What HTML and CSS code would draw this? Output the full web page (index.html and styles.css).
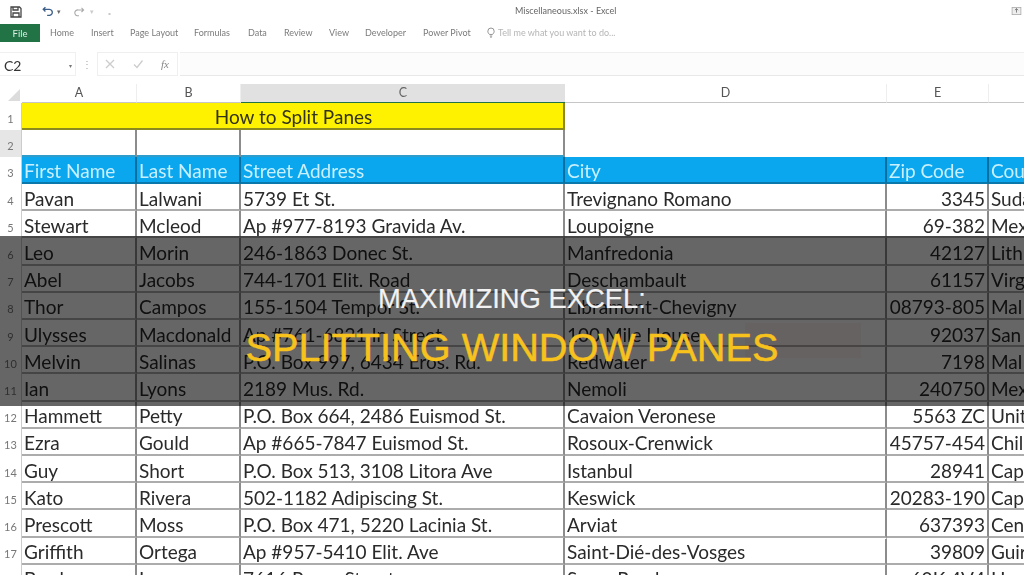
FILE: index.html
```html
<!DOCTYPE html>
<html lang="en">
<head>
<meta charset="utf-8">
<title>Maximizing Excel: Splitting Window Panes</title>
<link rel="stylesheet" href="styles.css">
</head>
<body>
<main class="app">
  <header class="titlebar">
    <div class="qat">
      <svg class="qi save" viewBox="0 0 12 12"><path d="M1 1h8.500L11 2.500V11H1z M3 1v3h5V1 M3 11V7h6v4" fill="none" stroke="#444" stroke-width="1.300"/></svg>
      <svg class="qi undo" viewBox="0 0 14 12"><path d="M4 1L1.500 3.500 4 6M2 3.500h6a3.500 3.500 0 0 1 1 7H6" fill="none" stroke="#3c5f8a" stroke-width="1.600"/></svg>
      <span class="caret">▾</span>
      <svg class="qi redo" viewBox="0 0 14 12"><path d="M10 1l2.500 2.500L10 6M12 3.500H6a3.500 3.500 0 0 0-1 7h2" fill="none" stroke="#a9a9a9" stroke-width="1.300"/></svg>
      <span class="caret faint">▾</span>
      <span class="caret custom">₌</span>
    </div>
    <div class="doc">Miscellaneous.xlsx - Excel</div>
    <svg class="restore" viewBox="0 0 12 10"><rect x=".5" y=".5" width="11" height="9" fill="#eee" stroke="#aaa"/><path d="M6 2v5M4 4l2-2 2 2" fill="none" stroke="#666"/></svg>
  </header>
  <nav class="ribbon">
    <span class="file">File</span>
    <span class="tab home">Home</span><span class="tab insert">Insert</span><span class="tab layout">Page Layout</span><span class="tab formulas">Formulas</span><span class="tab data">Data</span><span class="tab review">Review</span><span class="tab view">View</span><span class="tab dev">Developer</span><span class="tab pivot">Power Pivot</span>
    <svg class="bulb" viewBox="0 0 10 14"><path d="M3.200 9.500C2 8.500 1 7.300 1 5.300a4 4 0 0 1 8 0c0 2-1 3.200-2.200 4.200zM3.500 11.500h3M4 13h2" fill="none" stroke="#777" stroke-width="1"/></svg>
    <span class="tell">Tell me what you want to do...</span>
  </nav>
  <section class="formula">
    <div class="namebox"><span>C2</span><i>▾</i></div>
    <div class="grip">⋮</div>
    <div class="fbtns">
      <svg viewBox="0 0 10 10"><path d="M1 1l8 8M9 1l-8 8" stroke="#ccc" stroke-width="1.300"/></svg>
      <svg viewBox="0 0 10 10"><path d="M1 5.500l3 3 5.500-7" fill="none" stroke="#ccc" stroke-width="1.300"/></svg>
      <em>fx</em>
    </div>
    <div class="finput"></div>
  </section>
  <section class="sheet">
    <div class="corner"><b></b></div>
    <div class="ch">A</div><div class="ch">B</div><div class="ch sel">C</div><div class="ch">D</div><div class="ch">E</div><div class="ch last"></div>

    <div class="rh">1</div><div class="c merged">How to Split Panes</div><div class="c plain span3"></div>
    <div class="rh act">2</div><div class="c empty"></div><div class="c empty"></div><div class="c empty sel2"></div><div class="c plain span3"></div>

    <div class="rh">3</div><div class="c hd">First Name</div><div class="c hd">Last Name</div><div class="c hd">Street Address</div><div class="c hd">City</div><div class="c hd">Zip Code</div><div class="c hd">Cou</div>

    <div class="rh">4</div><div class="c">Pavan</div><div class="c">Lalwani</div><div class="c">5739 Et St.</div><div class="c">Trevignano Romano</div><div class="c n">3345</div><div class="c">Suda</div>
    <div class="rh">5</div><div class="c">Stewart</div><div class="c">Mcleod</div><div class="c">Ap #977-8193 Gravida Av.</div><div class="c">Loupoigne</div><div class="c n">69-382</div><div class="c">Mex</div>
    <div class="rh">6</div><div class="c">Leo</div><div class="c">Morin</div><div class="c">246-1863 Donec St.</div><div class="c">Manfredonia</div><div class="c n">42127</div><div class="c">Lith</div>
    <div class="rh">7</div><div class="c">Abel</div><div class="c">Jacobs</div><div class="c">744-1701 Elit. Road</div><div class="c">Deschambault</div><div class="c n">61157</div><div class="c">Virg</div>
    <div class="rh">8</div><div class="c">Thor</div><div class="c">Campos</div><div class="c">155-1504 Tempor St.</div><div class="c">Libramont-Chevigny</div><div class="c n">08793-805</div><div class="c">Mal</div>
    <div class="rh">9</div><div class="c">Ulysses</div><div class="c">Macdonald</div><div class="c">Ap #761-6821 In Street</div><div class="c">100 Mile House</div><div class="c n">92037</div><div class="c">San</div>
    <div class="rh">10</div><div class="c">Melvin</div><div class="c">Salinas</div><div class="c">P.O. Box 997, 6434 Eros. Rd.</div><div class="c">Redwater</div><div class="c n">7198</div><div class="c">Mal</div>
    <div class="rh">11</div><div class="c">Ian</div><div class="c">Lyons</div><div class="c">2189 Mus. Rd.</div><div class="c">Nemoli</div><div class="c n">240750</div><div class="c">Mex</div>
    <div class="rh">12</div><div class="c">Hammett</div><div class="c">Petty</div><div class="c">P.O. Box 664, 2486 Euismod St.</div><div class="c">Cavaion Veronese</div><div class="c n">5563 ZC</div><div class="c">Unit</div>
    <div class="rh">13</div><div class="c">Ezra</div><div class="c">Gould</div><div class="c">Ap #665-7847 Euismod St.</div><div class="c">Rosoux-Crenwick</div><div class="c n">45757-454</div><div class="c">Chile</div>
    <div class="rh">14</div><div class="c">Guy</div><div class="c">Short</div><div class="c">P.O. Box 513, 3108 Litora Ave</div><div class="c">Istanbul</div><div class="c n">28941</div><div class="c">Cap</div>
    <div class="rh">15</div><div class="c">Kato</div><div class="c">Rivera</div><div class="c">502-1182 Adipiscing St.</div><div class="c">Keswick</div><div class="c n">20283-190</div><div class="c">Cap</div>
    <div class="rh">16</div><div class="c">Prescott</div><div class="c">Moss</div><div class="c">P.O. Box 471, 5220 Lacinia St.</div><div class="c">Arviat</div><div class="c n">637393</div><div class="c">Cent</div>
    <div class="rh">17</div><div class="c">Griffith</div><div class="c">Ortega</div><div class="c">Ap #957-5410 Elit. Ave</div><div class="c">Saint-Dié-des-Vosges</div><div class="c n">39809</div><div class="c">Guir</div>
    <div class="rh">18</div><div class="c">Brody</div><div class="c">Lawson</div><div class="c">7616 Purus Street</div><div class="c">Sagar Road</div><div class="c n">60K 4V4</div><div class="c">Hon</div>
  </section>
  <div class="dashes"></div>
  <div class="banner">
    <div class="watermark"></div>
    <h1><span class="l1">Maximizing Excel:</span><span class="l2">Splitting Window Panes</span></h1>
  </div>
</main>
</body>
</html>
```
FILE: styles.css
```css
* { box-sizing: border-box; }
html, body { margin: 0; height: 100%; }
body { overflow: hidden; background: #fff; font-family: "Lato", "Liberation Sans", sans-serif; }
.app { position: relative; width: 1024px; height: 575px; overflow: hidden; background: #fff; }

.titlebar { height: 23px; display: flex; align-items: center; position: relative; padding-left: 10px; filter: blur(.3px); }
.qat { display: flex; align-items: center; color: #888; }
.qi { display: block; }
.save { width: 12px; height: 12px; margin-right: 20px; }
.undo { width: 12px; height: 11px; margin-top: -1px; }
.redo { width: 12px; height: 10px; margin-left: 12px; }
.caret { font-size: 7px; margin-left: 3px; color: #666; }
.caret.faint { color: #ccc; margin-left: 5px; }
.caret.custom { font-size: 9px; margin-left: 14px; color: #999; }
.doc { position: absolute; left: 515px; top: 5px; font-size: 9px; color: #666; white-space: nowrap; }
.restore { position: absolute; left: 1011px; top: 7px; width: 11px; height: 8px; }

.ribbon { height: 20px; display: flex; align-items: center; font-size: 9px; color: #7b7b7b; white-space: nowrap; filter: blur(.3px); }
.file { width: 40px; height: 18px; background: #217346; color: #d9efe2; display: flex; align-items: center; justify-content: center; font-size: 9.500px; margin-right: 10px; }
.tab { padding-bottom: 2px; }
.home { width: 41px; }
.insert { width: 39px; }
.layout { width: 64px; }
.formulas { width: 54px; }
.data { width: 36px; }
.review { width: 45px; }
.view { width: 36px; }
.dev { width: 58px; }
.pivot { width: 64px; }
.bulb { width: 8px; height: 11px; margin-bottom: 2px; }
.tell { margin-left: 3px; color: #b5b5b5; padding-bottom: 2px; }

.formula { height: 24px; margin-top: 9px; display: flex; align-items: stretch; position: relative; filter: blur(.3px); }
.namebox { width: 76px; display: flex; align-items: center; justify-content: space-between; padding: 2px 3px 0 4px; border: 1px solid #f0f0f0; border-left: 0; font-size: 14px; color: #333; }
.namebox i { font-size: 6px; font-style: normal; color: #777; }
.grip { width: 21px; display: flex; align-items: center; justify-content: center; font-size: 10px; color: #aaa; }
.fbtns { width: 81px; display: flex; align-items: center; gap: 18px; padding-left: 7px; border: 1px solid #efefef; }
.fbtns svg { width: 10px; height: 10px; }
.fbtns em { font-family: "Liberation Serif", serif; font-size: 11px; color: #888; }
.finput { flex: 1; margin-left: 2px; background: #fcfcfc; border-top: 1px solid #efefef; border-bottom: 1px solid #e8e8e8; }

.sheet {
  margin-top: 8px;
  display: grid;
  grid-template-columns: 22px 115px 104px 324px 322px 102px 60px;
  grid-template-rows: 18.500px repeat(18, 27.2px);
  font-size: 19px;
  color: #2a2a2a;
  filter: blur(.35px);
}
.corner { position: relative; background: #fff; }
.corner b { position: absolute; right: 2px; bottom: 2px; width: 0; height: 0; border-left: 12px solid transparent; border-bottom: 12px solid #dcdcdc; }
.ch { font-size: 12.500px; color: #555; display: flex; align-items: center; justify-content: center; border-right: 1px solid #eee; border-bottom: 1px solid #c6c6c6; }
.ch.sel { background: #e1e1e1; border-bottom: 1px solid #217346; color: #666; border-right: 0; }
.ch.last { border-right: 0; }
.rh { font-size: 11px; color: #777; display: flex; align-items: center; justify-content: center; padding-top: 5px; border-right: 1px solid #ccc; }
.rh.act { background: #e6e6e6; }
.c { display: flex; align-items: center; padding: 3px 0 0 2px; white-space: nowrap; overflow: hidden; border-right: 2px solid #8c8c8c; border-bottom: 2px solid #acacac; }
.n { justify-content: flex-end; padding: 3px 2px 0 0; }
.merged { grid-column: span 3; background: #fff200; justify-content: center; font-size: 19px; color: #33331a; border-right: 2px solid #8a8a20; border-bottom: 2px solid #8a8a20; }
.plain { border: 0; }
.span3 { grid-column: span 3; }
.empty { background: #fff; border-bottom-color: #2f9dcc; }
.hd { background: #0aa6ee; color: #c8f0ff; border-right-color: #0a6f9e; border-bottom-color: #0a78ab; }

.dashes { position: absolute; left: 858px; top: 538px; width: 150px; border-top: 1px dashed #fff; }
.banner { position: absolute; left: 0; right: 0; top: 236px; height: 170px; background: rgba(0, 0, 0, .6); display: flex; align-items: center; justify-content: center; }
.watermark { position: absolute; left: 745px; top: 87px; width: 116px; height: 35px; background: rgba(120, 70, 70, .1); }
.banner h1 { position: relative; margin: 0; text-align: center; font-family: "Liberation Sans", Arial, sans-serif; font-weight: 400; text-transform: uppercase; white-space: nowrap; }
.l1, .l2 { display: block; }
.l1 { font-size: 27.400px; line-height: 32px; margin-top: 10px; color: #f2f2f2; -webkit-text-stroke: .2px #f2f2f2; }
.l2 { font-size: 39.700px; line-height: 46px; margin-top: 9px; color: #f7c21c; -webkit-text-stroke: .5px #f7c21c; }
```
